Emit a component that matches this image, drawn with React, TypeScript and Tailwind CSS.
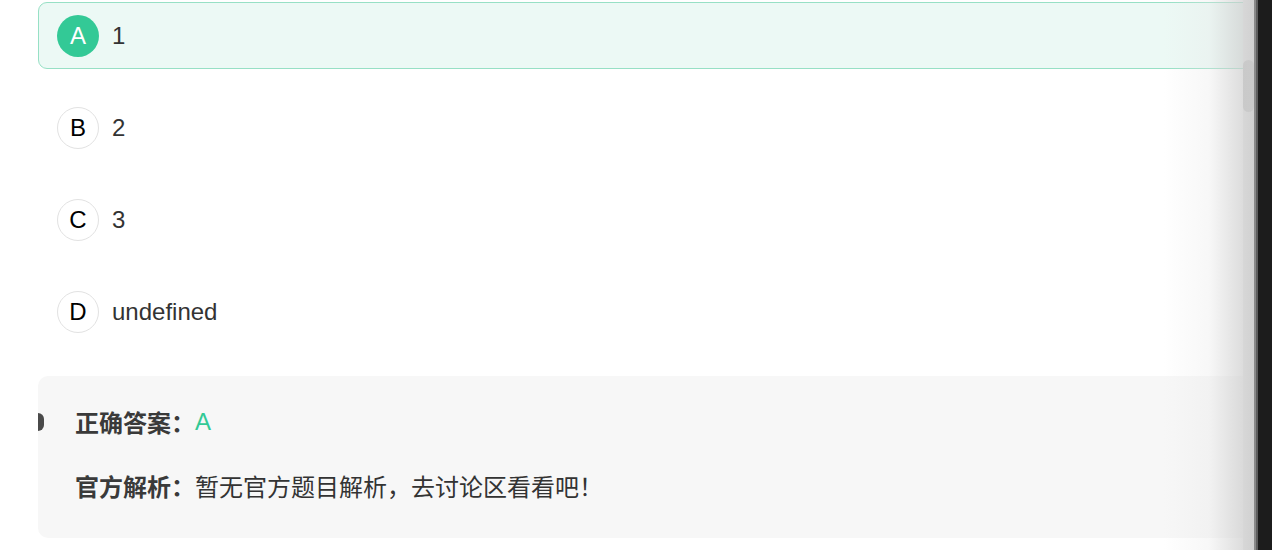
const options = [
  { key: "A", text: "1", selected: true },
  { key: "B", text: "2" },
  { key: "C", text: "3" },
  { key: "D", text: "undefined" },
]

function Option({ k, text, selected }: { k: string; text: string; selected?: boolean }) {
  return (
    <div
      className={
        "h-[67px] flex items-center pl-[18px] rounded-[9px] border " +
        (selected ? "bg-[#ecf9f5] border-[#97e0c5]" : "bg-white border-transparent")
      }
    >
      <span
        className={
          "w-[42px] h-[42px] rounded-full flex items-center justify-center text-[24px] leading-none " +
          (selected ? "bg-[#33c996] text-white" : "bg-white border border-[#e2e2e2] text-black")
        }
      >
        {k}
      </span>
      <span className="ml-[13px] text-[24px] leading-none text-[#333]">{text}</span>
    </div>
  )
}

export default function App() {
  return (
    <div
      className="flex h-[550px] w-[1272px] overflow-hidden bg-white"
      style={{ fontFamily: '"Liberation Sans", Arial, "Noto Sans CJK SC", sans-serif' }}
    >
      <div className="relative flex w-[1254px]">
        <div className="w-[1243px] overflow-hidden pl-[38px] pt-[2px]">
          <div className="mr-[-30px]">
            <div className="flex flex-col gap-[25px]">
              {options.map((o) => (
                <Option key={o.key} k={o.key} text={o.text} selected={o.selected} />
              ))}
            </div>

            <div
              className="relative mt-[31px] h-[162px] rounded-[10px] bg-[#f7f7f7] pl-[37px] pt-[31px] text-[24px] text-[#333]"
              style={{ fontFamily: '"Noto Sans CJK SC", "Liberation Sans", sans-serif' }}
            >
              <span className="absolute left-0 top-[37px] h-[18px] w-[6px] rounded-r-full bg-[#4a4a4a]" />
              <div className="h-[30px] flex items-center">
                <span className="font-semibold text-[#3a3a3a]">正确答案：</span>
                <span className="text-[#33c996]" style={{ fontFamily: '"Liberation Sans", sans-serif' }}>A</span>
              </div>
              <div className="h-[30px] mt-[34px] flex items-center">
                <span className="font-semibold text-[#3a3a3a]">官方解析：</span>
                <span>暂无官方题目解析，去讨论区看看吧！</span>
              </div>
            </div>
          </div>
        </div>

        <div className="w-[11px] bg-[#ececec]">
          <div className="mt-[60px] h-[52px] rounded-full bg-[#bdbdbd]" />
        </div>

        <div className="pointer-events-none absolute right-0 top-0 h-full w-[90px] bg-gradient-to-r from-transparent via-[#e6e6e6]/30 to-[#cccccc]/85" />
      </div>
      <div className="w-[2px] bg-[#8a8a8a]" />
      <div className="w-[2px] bg-[#5e5e5e]" />
      <div className="flex-1 bg-[#1c1c1c]" />
    </div>
  )
}
